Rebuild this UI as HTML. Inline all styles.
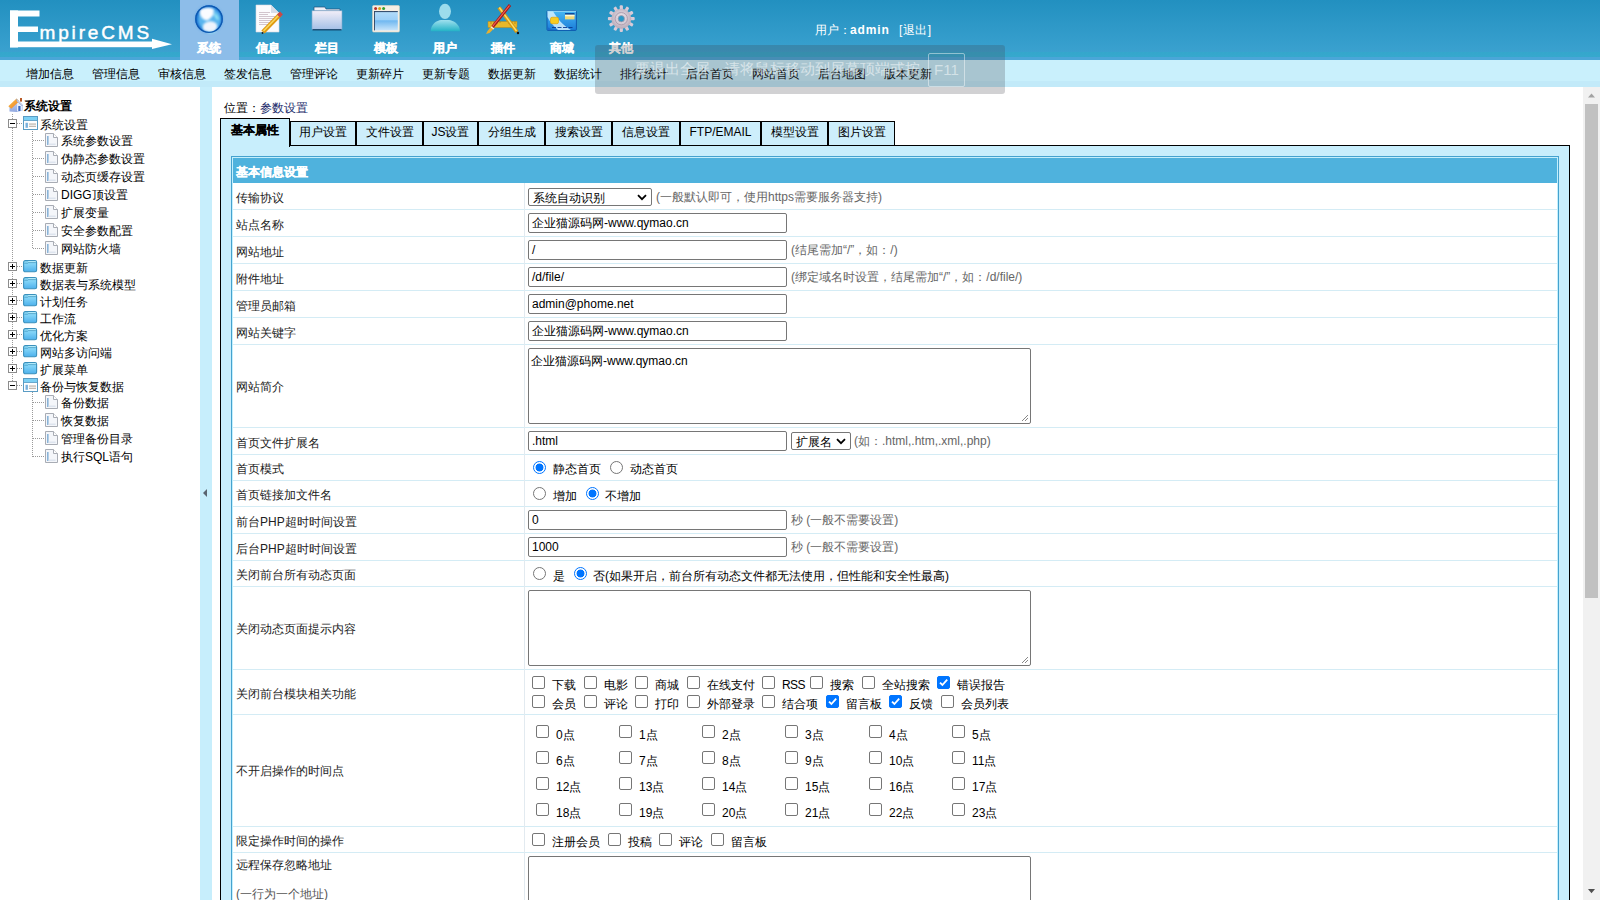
<!DOCTYPE html><html><head><meta charset="utf-8"><style>
*{margin:0;padding:0;box-sizing:border-box}
html,body{width:1600px;height:900px;overflow:hidden;background:#fff;font-family:"Liberation Sans", sans-serif;font-size:12px;color:#000}
.a{position:absolute;white-space:nowrap}
.t{position:absolute;white-space:nowrap;line-height:14px}
#hdr{position:absolute;left:0;top:0;width:1600px;height:60px;background:linear-gradient(#2290c0 0px,#3aa1cf 52px,#34a7cc 52px,#36a8cd 57px,#4aa6d8 57px,#4aa6d8 60px)}
#menu{position:absolute;left:0;top:60px;width:1600px;height:27px;background:linear-gradient(#c9f0fc 0,#c9f0fc 21px,#c2eaf9 21px,#c2eaf9 27px)}
.nav{position:absolute;top:0;width:59px;height:60px;color:#fff;font-weight:bold;text-align:center}
.nav .lb{position:absolute;left:-1px;top:41px;width:59px;line-height:14px;font-size:12px;-webkit-text-stroke:0.35px #fff}
.nav svg{position:absolute}
.mi{position:absolute;top:67px;line-height:14px;color:#000}
#left{position:absolute;left:0;top:87px;width:200px;height:813px;background:#fff}
#split{position:absolute;left:200px;top:87px;width:12px;height:813px;background:#c7eefc}
#content{position:absolute;left:212px;top:87px;width:1371px;height:813px;background:#fff;overflow:hidden}
#sb{position:absolute;left:1583px;top:87px;width:17px;height:813px;background:#f1f1f1}
</style></head><body>
<div id="hdr">
<svg class="a" style="left:0;top:0" width="180" height="60" viewBox="0 0 180 60">
<g fill="#fff">
<rect x="10" y="10.5" width="8" height="37"/>
<rect x="10" y="10.5" width="29.5" height="6"/>
<rect x="10" y="26.5" width="28" height="5.5"/>
<rect x="10" y="41.5" width="144" height="5.7"/>
<polygon points="152,38.8 172,44.3 152,49"/>
</g>
<text x="39.5" y="38.6" fill="#fff" stroke="#fff" stroke-width="0.45" font-family="Liberation Sans" font-size="19" letter-spacing="2.85">mpireCMS</text>
</svg>
<div class="a" style="left:180px;top:0;width:59px;height:60px;background:#8dbde9"></div>
<div class="nav" style="left:180px"><div class="lb">系统</div></div>
<div class="nav" style="left:239px"><div class="lb">信息</div></div>
<div class="nav" style="left:298px"><div class="lb">栏目</div></div>
<div class="nav" style="left:357px"><div class="lb">模板</div></div>
<div class="nav" style="left:416px"><div class="lb">用户</div></div>
<div class="nav" style="left:474px"><div class="lb">插件</div></div>
<div class="nav" style="left:533px"><div class="lb">商城</div></div>
<div class="nav" style="left:592px"><div class="lb">其他</div></div>

<svg class="a" style="left:0;top:0" width="660" height="40" viewBox="0 0 660 40">
<defs>
<radialGradient id="gb" cx="0.45" cy="0.4" r="0.6"><stop offset="0" stop-color="#7cc4f0"/><stop offset="0.7" stop-color="#2a86d6"/><stop offset="1" stop-color="#0b56a8"/></radialGradient>
<linearGradient id="fd" x1="0" y1="0" x2="0" y2="1"><stop offset="0" stop-color="#f2eef8"/><stop offset="1" stop-color="#a4c0e6"/></linearGradient>
<linearGradient id="wn" x1="0" y1="0" x2="0" y2="1"><stop offset="0" stop-color="#b4dcfa"/><stop offset="0.45" stop-color="#9cd0f8"/><stop offset="0.5" stop-color="#70b8f0"/><stop offset="1" stop-color="#c8e4fa"/></linearGradient>
<linearGradient id="us" x1="0" y1="0" x2="0" y2="1"><stop offset="0" stop-color="#a0e0ee"/><stop offset="1" stop-color="#22b2c6"/></linearGradient>
<linearGradient id="cd" x1="0" y1="0" x2="1" y2="1"><stop offset="0" stop-color="#bfe2fa"/><stop offset="0.45" stop-color="#5ab4ee"/><stop offset="1" stop-color="#0e6cc8"/></linearGradient>
<radialGradient id="gr" cx="0.5" cy="0.45" r="0.55"><stop offset="0" stop-color="#f4eef4"/><stop offset="1" stop-color="#b8aab8"/></radialGradient>
</defs>
<!-- globe -->
<filter id="bl" x="-20%" y="-20%" width="140%" height="140%"><feGaussianBlur stdDeviation="0.9"/></filter>
<filter id="bl2" x="-20%" y="-20%" width="140%" height="140%"><feGaussianBlur stdDeviation="0.5"/></filter>
<circle cx="209" cy="19.1" r="14.2" fill="#3a8ee0" opacity="0.35" filter="url(#bl)"/>
<circle cx="209" cy="19.1" r="13.8" fill="#1a72d0"/>
<circle cx="209.5" cy="19.5" r="11.5" fill="#58b4ee" filter="url(#bl)"/>
<g filter="url(#bl)">
<path d="M200,10 C204,7 211,7 214,9.5 C213,12.5 214.5,14.5 212,16.5 C209.5,19 208,21.5 205,20 C201.5,18.5 199,14.5 200,10Z" fill="#fafcff"/>
<path d="M203,25 C206,21 211,20.5 215,22.5 C218,24.5 218,28 215,30.5 C211,32.5 206,32 203,29.5Z" fill="#f0f4fc"/>
<path d="M214,13 C217,14 219,17 218.5,20.5 C216,19.5 214,16.5 214,13Z" fill="#90e4f4"/>
<path d="M208,32 C211,33 214,32.5 216,31" stroke="#a0ecf8" stroke-width="1.5" fill="none"/>
</g>
<circle cx="209" cy="19.1" r="13.2" fill="none" stroke="#0c58b0" stroke-width="1.3" filter="url(#bl2)"/>
<!-- document -->
<path d="M256,5 L271,5 L279,13 L279,32 L256,32Z" fill="#fbfbfd" stroke="#d8d8e0" stroke-width="0.6"/>
<path d="M271,5 L271,13 L279,13Z" fill="#d8dde8"/>
<g stroke="#c8b8c0" stroke-width="0.8"><line x1="259" y1="12.5" x2="270" y2="12.5"/><line x1="259" y1="14.5" x2="268" y2="14.5"/><line x1="259" y1="16.5" x2="275" y2="16.5"/><line x1="259" y1="18.5" x2="275" y2="18.5"/><line x1="259" y1="20.5" x2="274" y2="20.5"/><line x1="259" y1="22.5" x2="272" y2="22.5"/><line x1="259" y1="24.5" x2="268" y2="24.5"/></g>
<line x1="263" y1="32" x2="280" y2="14.5" stroke="#e09a10" stroke-width="4.6"/>
<line x1="263.5" y1="31" x2="279" y2="15" stroke="#f8d860" stroke-width="1.6"/>
<line x1="278.5" y1="16" x2="281.5" y2="13" stroke="#c84848" stroke-width="4"/>
<circle cx="262.5" cy="33" r="0.9" fill="#222"/>
<!-- folder -->
<path d="M314,7 L325,7 L326,9 L340,9 L340,11 L314,11Z" fill="#eef0f8" stroke="#1c4e78" stroke-width="0.7"/>
<rect x="312" y="10.8" width="30" height="18.8" fill="url(#fd)" stroke="#7ea8cc" stroke-width="0.6"/>
<line x1="312.5" y1="29.8" x2="341.5" y2="29.8" stroke="#0d3a60" stroke-width="1.2"/>
<!-- window -->
<rect x="372.6" y="5.6" width="26.8" height="26.4" rx="1" fill="#f6efe4" stroke="#e2d6c2" stroke-width="0.6"/>
<circle cx="375.6" cy="8.4" r="1.5" fill="#b8302a"/><circle cx="379.6" cy="8.4" r="1.5" fill="#d8a018"/><circle cx="383.6" cy="8.4" r="1.5" fill="#30a030"/>
<rect x="374.2" y="11.2" width="23.6" height="19.2" fill="url(#wn)"/>
<line x1="374.2" y1="11.6" x2="397.8" y2="11.6" stroke="#1a3050" stroke-width="0.9"/>
<line x1="374.5" y1="11.2" x2="374.5" y2="30.4" stroke="#1a3050" stroke-width="0.8"/>
<!-- user -->
<ellipse cx="445" cy="11.3" rx="6" ry="7.6" fill="#9cdcec"/>
<path d="M430.7,31.3 C430.7,24 437,20.5 441,20 L449,20 C453,20.5 460,24 460,31.3Z" fill="url(#us)"/>
<!-- plugin -->
<path d="M488,21.5 L517,21.5 L517,27.5 L488,27.5Z" fill="#e8b82a" stroke="#b88818" stroke-width="0.5"/>
<g stroke="#9a6a10" stroke-width="0.6"><line x1="491" y1="21.5" x2="491" y2="24"/><line x1="494" y1="21.5" x2="494" y2="23"/><line x1="497" y1="21.5" x2="497" y2="24"/><line x1="500" y1="21.5" x2="500" y2="23"/><line x1="509" y1="21.5" x2="509" y2="24"/><line x1="512" y1="21.5" x2="512" y2="23"/><line x1="515" y1="21.5" x2="515" y2="24"/></g>
<line x1="499" y1="7.5" x2="517" y2="32" stroke="#d89810" stroke-width="3.8"/>
<line x1="499.3" y1="7.5" x2="516.5" y2="31" stroke="#f8e070" stroke-width="1.4"/>
<circle cx="518" cy="33" r="1.2" fill="#111"/>
<line x1="510" y1="5" x2="492.5" y2="27" stroke="#a81818" stroke-width="3"/>
<line x1="509.5" y1="5.5" x2="492.5" y2="26.5" stroke="#f06a58" stroke-width="1.1"/>
<path d="M491.5,26 L487.5,31 L486,34 L489.5,33 L494,28.5Z" fill="#e8b030"/>
<path d="M491,27 L494,29" stroke="#f8f0e0" stroke-width="1.2"/>
<!-- card -->
<linearGradient id="cb" x1="0" y1="0" x2="0" y2="1"><stop offset="0" stop-color="#48b8f4"/><stop offset="1" stop-color="#1a7cd8"/></linearGradient>
<rect x="547" y="10.8" width="29.4" height="19.6" rx="1" fill="url(#cb)" stroke="#0b52a8" stroke-width="0.9"/>
<path d="M547.5,11.3 L553,11.3 C557,18 562,25 571,30 L558,30 C553,26 549.5,21 547.5,17Z" fill="#d4f0fe" opacity="0.85"/>
<path d="M547.5,11.3 L576,11.3" stroke="#a8e4fc" stroke-width="0.9"/>
<path d="M547.5,27 C550,29 553,30 556,30 L547.5,30Z" fill="#1a6ccc"/>
<rect x="550.5" y="17.3" width="8" height="6.4" rx="1.6" fill="#f8cc20" stroke="#e0a818" stroke-width="0.8"/>
<rect x="565" y="13" width="9.5" height="1.8" fill="#0a4aa0"/>
<rect x="565" y="14.8" width="9.5" height="4.6" fill="#f0d878"/>
<rect x="565" y="14.8" width="9.5" height="1.5" fill="#fff8d8"/>
<line x1="552" y1="27.5" x2="573" y2="27.5" stroke="#0a3a90" stroke-width="0.9" stroke-dasharray="4 1.5"/>
<!-- gear -->
<g transform="translate(621.3,18.7)">
<g fill="#d8cbd8">
<rect x="-1.6" y="-13.4" width="3.2" height="5" rx="1"/>
<rect x="-1.6" y="-13.4" width="3.2" height="5" rx="1" transform="rotate(30)"/>
<rect x="-1.6" y="-13.4" width="3.2" height="5" rx="1" transform="rotate(60)"/>
<rect x="-1.6" y="-13.4" width="3.2" height="5" rx="1" transform="rotate(90)"/>
<rect x="-1.6" y="-13.4" width="3.2" height="5" rx="1" transform="rotate(120)"/>
<rect x="-1.6" y="-13.4" width="3.2" height="5" rx="1" transform="rotate(150)"/>
<rect x="-1.6" y="-13.4" width="3.2" height="5" rx="1" transform="rotate(180)"/>
<rect x="-1.6" y="-13.4" width="3.2" height="5" rx="1" transform="rotate(210)"/>
<rect x="-1.6" y="-13.4" width="3.2" height="5" rx="1" transform="rotate(240)"/>
<rect x="-1.6" y="-13.4" width="3.2" height="5" rx="1" transform="rotate(270)"/>
<rect x="-1.6" y="-13.4" width="3.2" height="5" rx="1" transform="rotate(300)"/>
<rect x="-1.6" y="-13.4" width="3.2" height="5" rx="1" transform="rotate(330)"/>
</g>
<circle r="10" fill="url(#gr)"/>
<circle r="6.2" fill="none" stroke="#b0a0b0" stroke-width="1"/>
<circle r="3.2" fill="#2a9ac8"/>
<circle r="3.2" fill="none" stroke="#a898a8" stroke-width="0.8"/>
</g>
</svg>

</div>
<div class="t" style="left:815px;top:23px;color:#fff">用户：</div>
<div class="t" style="left:850px;top:23px;color:#fff;font-weight:bold;letter-spacing:0.9px">admin</div>
<div class="t" style="left:899px;top:23px;color:#fff;letter-spacing:0.5px">[退出]</div>
<div id="menu"></div>
<div class="mi" style="left:26px">增加信息</div>
<div class="mi" style="left:92px">管理信息</div>
<div class="mi" style="left:158px">审核信息</div>
<div class="mi" style="left:224px">签发信息</div>
<div class="mi" style="left:290px">管理评论</div>
<div class="mi" style="left:356px">更新碎片</div>
<div class="mi" style="left:422px">更新专题</div>
<div class="mi" style="left:488px">数据更新</div>
<div class="mi" style="left:554px">数据统计</div>
<div class="mi" style="left:620px">排行统计</div>
<div class="mi" style="left:686px">后台首页</div>
<div class="mi" style="left:752px">网站首页</div>
<div class="mi" style="left:818px">后台地图</div>
<div class="mi" style="left:884px">版本更新</div>
<div id="left"></div>
<svg class="a" style="left:8px;top:97px" width="16" height="16" viewBox="0 0 16 16"><defs><linearGradient id="rf" x1="0" y1="0" x2="1" y2="1"><stop offset="0" stop-color="#f8c850"/><stop offset="1" stop-color="#f07a20"/></linearGradient><linearGradient id="wl" x1="0" y1="0" x2="0" y2="1"><stop offset="0" stop-color="#c8d4f4"/><stop offset="1" stop-color="#90a8e0"/></linearGradient></defs><path d="M1.5,9 L1.5,14.5 L9,15 L14.5,13.5 L14.5,8.5 L9,3 Z" fill="url(#wl)"/><path d="M9,4 L14,8.8 L14,13.4 L9,14.6Z" fill="#e4ecfc"/><rect x="10.3" y="9" width="2.2" height="5" fill="#3a68c0"/><path d="M0.3,9.2 L8.5,1.5 L11.2,4.2 L3.3,11.8Z" fill="url(#rf)"/><path d="M8.5,2 L14.8,8.2 L14.2,9 L9,4.2Z" fill="#d8e0f0" stroke="#8898c8" stroke-width="0.5"/><rect x="12" y="1" width="2" height="3.6" fill="#b85a28"/></svg>
<div class="t" style="left:24px;top:99px;font-weight:bold">系统设置</div>
<div class="a" style="left:12px;top:114px;width:1px;height:271px;background:repeating-linear-gradient(to bottom,#9a9a9a 0,#9a9a9a 1px,transparent 1px,transparent 2px)"></div>
<div class="a" style="left:8px;top:119px;width:9px;height:9px;border:1px solid #8c8c8c;background:#fff"></div><div class="a" style="left:10px;top:123px;width:5px;height:1px;background:#000"></div>
<div class="a" style="left:17px;top:123px;width:6px;height:1px;background:repeating-linear-gradient(to right,#9a9a9a 0,#9a9a9a 1px,transparent 1px,transparent 2px)"></div>
<svg class="a" style="left:23px;top:116px" width="15" height="14" viewBox="0 0 15 14"><rect x="0.5" y="0.5" width="14" height="13" fill="#fdfeff" stroke="#5a9cc4" stroke-width="1"/><rect x="1" y="1" width="13" height="3.2" fill="#7cd0f4"/><line x1="1" y1="4.5" x2="14" y2="4.5" stroke="#4a94c0" stroke-width="0.8"/><rect x="2.5" y="6.8" width="2.4" height="5" fill="#78b0dc"/><rect x="6" y="7.6" width="7" height="0.9" fill="#a89c90"/><rect x="6" y="9.8" width="7" height="0.9" fill="#a89c90"/></svg>
<div class="t" style="left:40px;top:118px">系统设置</div>
<div class="a" style="left:32px;top:131px;width:1px;height:117px;background:repeating-linear-gradient(to bottom,#9a9a9a 0,#9a9a9a 1px,transparent 1px,transparent 2px)"></div>
<div class="a" style="left:33px;top:140px;width:12px;height:1px;background:repeating-linear-gradient(to right,#9a9a9a 0,#9a9a9a 1px,transparent 1px,transparent 2px)"></div>
<svg class="a" style="left:45px;top:133px" width="13" height="14" viewBox="0 0 13 14"><path d="M0.5,0.5 L8.5,0.5 L12.5,4.5 L12.5,13.5 L0.5,13.5Z" fill="#f4f6fa" stroke="#a8acb4" stroke-width="1"/><path d="M8.5,0.5 L8.5,4.5 L12.5,4.5" fill="#fff" stroke="#a8acb4" stroke-width="1"/><rect x="2" y="3" width="1.6" height="9" fill="#8ab4d8"/><rect x="3.6" y="10.5" width="7" height="1.5" fill="#dde4ee"/></svg>
<div class="t" style="left:61px;top:134px">系统参数设置</div>
<div class="a" style="left:33px;top:158px;width:12px;height:1px;background:repeating-linear-gradient(to right,#9a9a9a 0,#9a9a9a 1px,transparent 1px,transparent 2px)"></div>
<svg class="a" style="left:45px;top:151px" width="13" height="14" viewBox="0 0 13 14"><path d="M0.5,0.5 L8.5,0.5 L12.5,4.5 L12.5,13.5 L0.5,13.5Z" fill="#f4f6fa" stroke="#a8acb4" stroke-width="1"/><path d="M8.5,0.5 L8.5,4.5 L12.5,4.5" fill="#fff" stroke="#a8acb4" stroke-width="1"/><rect x="2" y="3" width="1.6" height="9" fill="#8ab4d8"/><rect x="3.6" y="10.5" width="7" height="1.5" fill="#dde4ee"/></svg>
<div class="t" style="left:61px;top:152px">伪静态参数设置</div>
<div class="a" style="left:33px;top:176px;width:12px;height:1px;background:repeating-linear-gradient(to right,#9a9a9a 0,#9a9a9a 1px,transparent 1px,transparent 2px)"></div>
<svg class="a" style="left:45px;top:169px" width="13" height="14" viewBox="0 0 13 14"><path d="M0.5,0.5 L8.5,0.5 L12.5,4.5 L12.5,13.5 L0.5,13.5Z" fill="#f4f6fa" stroke="#a8acb4" stroke-width="1"/><path d="M8.5,0.5 L8.5,4.5 L12.5,4.5" fill="#fff" stroke="#a8acb4" stroke-width="1"/><rect x="2" y="3" width="1.6" height="9" fill="#8ab4d8"/><rect x="3.6" y="10.5" width="7" height="1.5" fill="#dde4ee"/></svg>
<div class="t" style="left:61px;top:170px">动态页缓存设置</div>
<div class="a" style="left:33px;top:194px;width:12px;height:1px;background:repeating-linear-gradient(to right,#9a9a9a 0,#9a9a9a 1px,transparent 1px,transparent 2px)"></div>
<svg class="a" style="left:45px;top:187px" width="13" height="14" viewBox="0 0 13 14"><path d="M0.5,0.5 L8.5,0.5 L12.5,4.5 L12.5,13.5 L0.5,13.5Z" fill="#f4f6fa" stroke="#a8acb4" stroke-width="1"/><path d="M8.5,0.5 L8.5,4.5 L12.5,4.5" fill="#fff" stroke="#a8acb4" stroke-width="1"/><rect x="2" y="3" width="1.6" height="9" fill="#8ab4d8"/><rect x="3.6" y="10.5" width="7" height="1.5" fill="#dde4ee"/></svg>
<div class="t" style="left:61px;top:188px">DIGG顶设置</div>
<div class="a" style="left:33px;top:212px;width:12px;height:1px;background:repeating-linear-gradient(to right,#9a9a9a 0,#9a9a9a 1px,transparent 1px,transparent 2px)"></div>
<svg class="a" style="left:45px;top:205px" width="13" height="14" viewBox="0 0 13 14"><path d="M0.5,0.5 L8.5,0.5 L12.5,4.5 L12.5,13.5 L0.5,13.5Z" fill="#f4f6fa" stroke="#a8acb4" stroke-width="1"/><path d="M8.5,0.5 L8.5,4.5 L12.5,4.5" fill="#fff" stroke="#a8acb4" stroke-width="1"/><rect x="2" y="3" width="1.6" height="9" fill="#8ab4d8"/><rect x="3.6" y="10.5" width="7" height="1.5" fill="#dde4ee"/></svg>
<div class="t" style="left:61px;top:206px">扩展变量</div>
<div class="a" style="left:33px;top:230px;width:12px;height:1px;background:repeating-linear-gradient(to right,#9a9a9a 0,#9a9a9a 1px,transparent 1px,transparent 2px)"></div>
<svg class="a" style="left:45px;top:223px" width="13" height="14" viewBox="0 0 13 14"><path d="M0.5,0.5 L8.5,0.5 L12.5,4.5 L12.5,13.5 L0.5,13.5Z" fill="#f4f6fa" stroke="#a8acb4" stroke-width="1"/><path d="M8.5,0.5 L8.5,4.5 L12.5,4.5" fill="#fff" stroke="#a8acb4" stroke-width="1"/><rect x="2" y="3" width="1.6" height="9" fill="#8ab4d8"/><rect x="3.6" y="10.5" width="7" height="1.5" fill="#dde4ee"/></svg>
<div class="t" style="left:61px;top:224px">安全参数配置</div>
<div class="a" style="left:33px;top:248px;width:12px;height:1px;background:repeating-linear-gradient(to right,#9a9a9a 0,#9a9a9a 1px,transparent 1px,transparent 2px)"></div>
<svg class="a" style="left:45px;top:241px" width="13" height="14" viewBox="0 0 13 14"><path d="M0.5,0.5 L8.5,0.5 L12.5,4.5 L12.5,13.5 L0.5,13.5Z" fill="#f4f6fa" stroke="#a8acb4" stroke-width="1"/><path d="M8.5,0.5 L8.5,4.5 L12.5,4.5" fill="#fff" stroke="#a8acb4" stroke-width="1"/><rect x="2" y="3" width="1.6" height="9" fill="#8ab4d8"/><rect x="3.6" y="10.5" width="7" height="1.5" fill="#dde4ee"/></svg>
<div class="t" style="left:61px;top:242px">网站防火墙</div>
<div class="a" style="left:8px;top:262px;width:9px;height:9px;border:1px solid #8c8c8c;background:#fff"></div><div class="a" style="left:10px;top:266px;width:5px;height:1px;background:#000"></div><div class="a" style="left:12px;top:264px;width:1px;height:5px;background:#000"></div>
<div class="a" style="left:17px;top:266px;width:6px;height:1px;background:repeating-linear-gradient(to right,#9a9a9a 0,#9a9a9a 1px,transparent 1px,transparent 2px)"></div>
<svg class="a" style="left:23px;top:260px" width="15" height="13" viewBox="0 0 15 13"><defs><linearGradient id="fb0" x1="0" y1="0" x2="0" y2="1"><stop offset="0" stop-color="#9ae4fc"/><stop offset="1" stop-color="#4cb0ec"/></linearGradient></defs><rect x="0.6" y="0.6" width="13" height="11.2" rx="1.6" fill="url(#fb0)" stroke="#3a90bc" stroke-width="1.1"/><path d="M5,1.3 L12.8,1.3 L12.8,2.6 L5.6,2.6Z" fill="#c4f4fe"/><path d="M1.3,3.2 L4.6,3.2 L5.4,2.6 L12.9,2.6" fill="none" stroke="#3a90bc" stroke-width="0.7"/></svg>
<div class="t" style="left:40px;top:261px">数据更新</div>
<div class="a" style="left:8px;top:279px;width:9px;height:9px;border:1px solid #8c8c8c;background:#fff"></div><div class="a" style="left:10px;top:283px;width:5px;height:1px;background:#000"></div><div class="a" style="left:12px;top:281px;width:1px;height:5px;background:#000"></div>
<div class="a" style="left:17px;top:283px;width:6px;height:1px;background:repeating-linear-gradient(to right,#9a9a9a 0,#9a9a9a 1px,transparent 1px,transparent 2px)"></div>
<svg class="a" style="left:23px;top:277px" width="15" height="13" viewBox="0 0 15 13"><defs><linearGradient id="fb1" x1="0" y1="0" x2="0" y2="1"><stop offset="0" stop-color="#9ae4fc"/><stop offset="1" stop-color="#4cb0ec"/></linearGradient></defs><rect x="0.6" y="0.6" width="13" height="11.2" rx="1.6" fill="url(#fb1)" stroke="#3a90bc" stroke-width="1.1"/><path d="M5,1.3 L12.8,1.3 L12.8,2.6 L5.6,2.6Z" fill="#c4f4fe"/><path d="M1.3,3.2 L4.6,3.2 L5.4,2.6 L12.9,2.6" fill="none" stroke="#3a90bc" stroke-width="0.7"/></svg>
<div class="t" style="left:40px;top:278px">数据表与系统模型</div>
<div class="a" style="left:8px;top:296px;width:9px;height:9px;border:1px solid #8c8c8c;background:#fff"></div><div class="a" style="left:10px;top:300px;width:5px;height:1px;background:#000"></div><div class="a" style="left:12px;top:298px;width:1px;height:5px;background:#000"></div>
<div class="a" style="left:17px;top:300px;width:6px;height:1px;background:repeating-linear-gradient(to right,#9a9a9a 0,#9a9a9a 1px,transparent 1px,transparent 2px)"></div>
<svg class="a" style="left:23px;top:294px" width="15" height="13" viewBox="0 0 15 13"><defs><linearGradient id="fb2" x1="0" y1="0" x2="0" y2="1"><stop offset="0" stop-color="#9ae4fc"/><stop offset="1" stop-color="#4cb0ec"/></linearGradient></defs><rect x="0.6" y="0.6" width="13" height="11.2" rx="1.6" fill="url(#fb2)" stroke="#3a90bc" stroke-width="1.1"/><path d="M5,1.3 L12.8,1.3 L12.8,2.6 L5.6,2.6Z" fill="#c4f4fe"/><path d="M1.3,3.2 L4.6,3.2 L5.4,2.6 L12.9,2.6" fill="none" stroke="#3a90bc" stroke-width="0.7"/></svg>
<div class="t" style="left:40px;top:295px">计划任务</div>
<div class="a" style="left:8px;top:313px;width:9px;height:9px;border:1px solid #8c8c8c;background:#fff"></div><div class="a" style="left:10px;top:317px;width:5px;height:1px;background:#000"></div><div class="a" style="left:12px;top:315px;width:1px;height:5px;background:#000"></div>
<div class="a" style="left:17px;top:317px;width:6px;height:1px;background:repeating-linear-gradient(to right,#9a9a9a 0,#9a9a9a 1px,transparent 1px,transparent 2px)"></div>
<svg class="a" style="left:23px;top:311px" width="15" height="13" viewBox="0 0 15 13"><defs><linearGradient id="fb3" x1="0" y1="0" x2="0" y2="1"><stop offset="0" stop-color="#9ae4fc"/><stop offset="1" stop-color="#4cb0ec"/></linearGradient></defs><rect x="0.6" y="0.6" width="13" height="11.2" rx="1.6" fill="url(#fb3)" stroke="#3a90bc" stroke-width="1.1"/><path d="M5,1.3 L12.8,1.3 L12.8,2.6 L5.6,2.6Z" fill="#c4f4fe"/><path d="M1.3,3.2 L4.6,3.2 L5.4,2.6 L12.9,2.6" fill="none" stroke="#3a90bc" stroke-width="0.7"/></svg>
<div class="t" style="left:40px;top:312px">工作流</div>
<div class="a" style="left:8px;top:330px;width:9px;height:9px;border:1px solid #8c8c8c;background:#fff"></div><div class="a" style="left:10px;top:334px;width:5px;height:1px;background:#000"></div><div class="a" style="left:12px;top:332px;width:1px;height:5px;background:#000"></div>
<div class="a" style="left:17px;top:334px;width:6px;height:1px;background:repeating-linear-gradient(to right,#9a9a9a 0,#9a9a9a 1px,transparent 1px,transparent 2px)"></div>
<svg class="a" style="left:23px;top:328px" width="15" height="13" viewBox="0 0 15 13"><defs><linearGradient id="fb4" x1="0" y1="0" x2="0" y2="1"><stop offset="0" stop-color="#9ae4fc"/><stop offset="1" stop-color="#4cb0ec"/></linearGradient></defs><rect x="0.6" y="0.6" width="13" height="11.2" rx="1.6" fill="url(#fb4)" stroke="#3a90bc" stroke-width="1.1"/><path d="M5,1.3 L12.8,1.3 L12.8,2.6 L5.6,2.6Z" fill="#c4f4fe"/><path d="M1.3,3.2 L4.6,3.2 L5.4,2.6 L12.9,2.6" fill="none" stroke="#3a90bc" stroke-width="0.7"/></svg>
<div class="t" style="left:40px;top:329px">优化方案</div>
<div class="a" style="left:8px;top:347px;width:9px;height:9px;border:1px solid #8c8c8c;background:#fff"></div><div class="a" style="left:10px;top:351px;width:5px;height:1px;background:#000"></div><div class="a" style="left:12px;top:349px;width:1px;height:5px;background:#000"></div>
<div class="a" style="left:17px;top:351px;width:6px;height:1px;background:repeating-linear-gradient(to right,#9a9a9a 0,#9a9a9a 1px,transparent 1px,transparent 2px)"></div>
<svg class="a" style="left:23px;top:345px" width="15" height="13" viewBox="0 0 15 13"><defs><linearGradient id="fb5" x1="0" y1="0" x2="0" y2="1"><stop offset="0" stop-color="#9ae4fc"/><stop offset="1" stop-color="#4cb0ec"/></linearGradient></defs><rect x="0.6" y="0.6" width="13" height="11.2" rx="1.6" fill="url(#fb5)" stroke="#3a90bc" stroke-width="1.1"/><path d="M5,1.3 L12.8,1.3 L12.8,2.6 L5.6,2.6Z" fill="#c4f4fe"/><path d="M1.3,3.2 L4.6,3.2 L5.4,2.6 L12.9,2.6" fill="none" stroke="#3a90bc" stroke-width="0.7"/></svg>
<div class="t" style="left:40px;top:346px">网站多访问端</div>
<div class="a" style="left:8px;top:364px;width:9px;height:9px;border:1px solid #8c8c8c;background:#fff"></div><div class="a" style="left:10px;top:368px;width:5px;height:1px;background:#000"></div><div class="a" style="left:12px;top:366px;width:1px;height:5px;background:#000"></div>
<div class="a" style="left:17px;top:368px;width:6px;height:1px;background:repeating-linear-gradient(to right,#9a9a9a 0,#9a9a9a 1px,transparent 1px,transparent 2px)"></div>
<svg class="a" style="left:23px;top:362px" width="15" height="13" viewBox="0 0 15 13"><defs><linearGradient id="fb6" x1="0" y1="0" x2="0" y2="1"><stop offset="0" stop-color="#9ae4fc"/><stop offset="1" stop-color="#4cb0ec"/></linearGradient></defs><rect x="0.6" y="0.6" width="13" height="11.2" rx="1.6" fill="url(#fb6)" stroke="#3a90bc" stroke-width="1.1"/><path d="M5,1.3 L12.8,1.3 L12.8,2.6 L5.6,2.6Z" fill="#c4f4fe"/><path d="M1.3,3.2 L4.6,3.2 L5.4,2.6 L12.9,2.6" fill="none" stroke="#3a90bc" stroke-width="0.7"/></svg>
<div class="t" style="left:40px;top:363px">扩展菜单</div>
<div class="a" style="left:8px;top:381px;width:9px;height:9px;border:1px solid #8c8c8c;background:#fff"></div><div class="a" style="left:10px;top:385px;width:5px;height:1px;background:#000"></div>
<div class="a" style="left:17px;top:385px;width:6px;height:1px;background:repeating-linear-gradient(to right,#9a9a9a 0,#9a9a9a 1px,transparent 1px,transparent 2px)"></div>
<svg class="a" style="left:23px;top:378px" width="15" height="14" viewBox="0 0 15 14"><rect x="0.5" y="0.5" width="14" height="13" fill="#fdfeff" stroke="#5a9cc4" stroke-width="1"/><rect x="1" y="1" width="13" height="3.2" fill="#7cd0f4"/><line x1="1" y1="4.5" x2="14" y2="4.5" stroke="#4a94c0" stroke-width="0.8"/><rect x="2.5" y="6.8" width="2.4" height="5" fill="#78b0dc"/><rect x="6" y="7.6" width="7" height="0.9" fill="#a89c90"/><rect x="6" y="9.8" width="7" height="0.9" fill="#a89c90"/></svg>
<div class="t" style="left:40px;top:380px">备份与恢复数据</div>
<div class="a" style="left:32px;top:392px;width:1px;height:65px;background:repeating-linear-gradient(to bottom,#9a9a9a 0,#9a9a9a 1px,transparent 1px,transparent 2px)"></div>
<div class="a" style="left:33px;top:402px;width:12px;height:1px;background:repeating-linear-gradient(to right,#9a9a9a 0,#9a9a9a 1px,transparent 1px,transparent 2px)"></div>
<svg class="a" style="left:45px;top:395px" width="13" height="14" viewBox="0 0 13 14"><path d="M0.5,0.5 L8.5,0.5 L12.5,4.5 L12.5,13.5 L0.5,13.5Z" fill="#f4f6fa" stroke="#a8acb4" stroke-width="1"/><path d="M8.5,0.5 L8.5,4.5 L12.5,4.5" fill="#fff" stroke="#a8acb4" stroke-width="1"/><rect x="2" y="3" width="1.6" height="9" fill="#8ab4d8"/><rect x="3.6" y="10.5" width="7" height="1.5" fill="#dde4ee"/></svg>
<div class="t" style="left:61px;top:396px">备份数据</div>
<div class="a" style="left:33px;top:420px;width:12px;height:1px;background:repeating-linear-gradient(to right,#9a9a9a 0,#9a9a9a 1px,transparent 1px,transparent 2px)"></div>
<svg class="a" style="left:45px;top:413px" width="13" height="14" viewBox="0 0 13 14"><path d="M0.5,0.5 L8.5,0.5 L12.5,4.5 L12.5,13.5 L0.5,13.5Z" fill="#f4f6fa" stroke="#a8acb4" stroke-width="1"/><path d="M8.5,0.5 L8.5,4.5 L12.5,4.5" fill="#fff" stroke="#a8acb4" stroke-width="1"/><rect x="2" y="3" width="1.6" height="9" fill="#8ab4d8"/><rect x="3.6" y="10.5" width="7" height="1.5" fill="#dde4ee"/></svg>
<div class="t" style="left:61px;top:414px">恢复数据</div>
<div class="a" style="left:33px;top:438px;width:12px;height:1px;background:repeating-linear-gradient(to right,#9a9a9a 0,#9a9a9a 1px,transparent 1px,transparent 2px)"></div>
<svg class="a" style="left:45px;top:431px" width="13" height="14" viewBox="0 0 13 14"><path d="M0.5,0.5 L8.5,0.5 L12.5,4.5 L12.5,13.5 L0.5,13.5Z" fill="#f4f6fa" stroke="#a8acb4" stroke-width="1"/><path d="M8.5,0.5 L8.5,4.5 L12.5,4.5" fill="#fff" stroke="#a8acb4" stroke-width="1"/><rect x="2" y="3" width="1.6" height="9" fill="#8ab4d8"/><rect x="3.6" y="10.5" width="7" height="1.5" fill="#dde4ee"/></svg>
<div class="t" style="left:61px;top:432px">管理备份目录</div>
<div class="a" style="left:33px;top:456px;width:12px;height:1px;background:repeating-linear-gradient(to right,#9a9a9a 0,#9a9a9a 1px,transparent 1px,transparent 2px)"></div>
<svg class="a" style="left:45px;top:449px" width="13" height="14" viewBox="0 0 13 14"><path d="M0.5,0.5 L8.5,0.5 L12.5,4.5 L12.5,13.5 L0.5,13.5Z" fill="#f4f6fa" stroke="#a8acb4" stroke-width="1"/><path d="M8.5,0.5 L8.5,4.5 L12.5,4.5" fill="#fff" stroke="#a8acb4" stroke-width="1"/><rect x="2" y="3" width="1.6" height="9" fill="#8ab4d8"/><rect x="3.6" y="10.5" width="7" height="1.5" fill="#dde4ee"/></svg>
<div class="t" style="left:61px;top:450px">执行SQL语句</div>
<div id="split"></div>
<svg class="a" style="left:200px;top:486px" width="12" height="14"><polygon points="3,7 7,3 7,11" fill="#5a6470"/></svg>
<style>
.inp{position:absolute;height:20px;border:1px solid #767676;border-radius:2px;background:#fff;padding-left:3px;line-height:19px;color:#000;white-space:nowrap;overflow:hidden}
.sel{position:absolute;height:18px;border:1px solid #767676;border-radius:2px;background:#fff;padding-left:4px;line-height:19px;white-space:nowrap;overflow:hidden}
.ta{position:absolute;border:1px solid #767676;border-radius:2px;background:#fff;padding:5px 0 0 2px;line-height:14px;white-space:nowrap;overflow:hidden}
.hint{position:absolute;line-height:14px;color:#666;white-space:nowrap}
.lbl{position:absolute;left:236px;line-height:14px;color:#222;white-space:nowrap}
.rd{position:absolute;width:13px;height:13px;border:1px solid #767676;border-radius:50%;background:#fff}
.rd.on{border:1px solid #0075ff;background:radial-gradient(circle,#0075ff 0,#0075ff 3.6px,#fff 4.3px)}
.cb{position:absolute;width:13px;height:13px;border:1px solid #767676;border-radius:2px;background:#fff}
.cb.on{border:1px solid #0075ff;background:#0075ff}
.tab{position:absolute;top:121px;height:24px;border:1px solid #000;border-bottom:none;background:#cdeefb;text-align:center;line-height:14px;padding-top:3px;white-space:nowrap}
</style>
<div class="t" style="left:224px;top:101px">位置：<span style="color:#1a2a6a">参数设置</span></div>
<div class="a" style="left:220px;top:145px;width:1350px;height:760px;border:1px solid #000;background:#c8eefc"></div>
<div class="tab" style="left:290px;width:66px">用户设置</div>
<div class="tab" style="left:356px;width:67px">文件设置</div>
<div class="tab" style="left:423px;width:55px">JS设置</div>
<div class="tab" style="left:478px;width:67px">分组生成</div>
<div class="tab" style="left:545px;width:67px">搜索设置</div>
<div class="tab" style="left:612px;width:68px">信息设置</div>
<div class="tab" style="left:680px;width:81px">FTP/EMAIL</div>
<div class="tab" style="left:761px;width:67px">模型设置</div>
<div class="tab" style="left:828px;width:67px">图片设置</div>
<div class="tab" style="left:220px;top:118px;width:70px;height:29px;background:#c8eefc;font-weight:bold;padding-top:4px;border-bottom:none;-webkit-text-stroke:0.2px #000">基本属性</div>
<div class="a" style="left:231px;top:156px;width:1328px;height:760px;border:1px solid #45a2cf;background:#c4effc"></div>
<div class="a" style="left:233px;top:158px;width:1324px;height:25px;background:#4fb2dd"></div>
<div class="t" style="left:236px;top:165px;color:#fff;font-weight:bold;-webkit-text-stroke:0.3px #fff">基本信息设置</div>
<div class="a" style="left:233px;top:183px;width:1324px;height:720px;background:#fff"></div>
<div class="a" style="left:233px;top:209px;width:1324px;height:1px;background:#d4ecf5"></div>
<div class="a" style="left:233px;top:236px;width:1324px;height:1px;background:#d4ecf5"></div>
<div class="a" style="left:233px;top:263px;width:1324px;height:1px;background:#d4ecf5"></div>
<div class="a" style="left:233px;top:290px;width:1324px;height:1px;background:#d4ecf5"></div>
<div class="a" style="left:233px;top:317px;width:1324px;height:1px;background:#d4ecf5"></div>
<div class="a" style="left:233px;top:344px;width:1324px;height:1px;background:#d4ecf5"></div>
<div class="a" style="left:233px;top:427px;width:1324px;height:1px;background:#d4ecf5"></div>
<div class="a" style="left:233px;top:454px;width:1324px;height:1px;background:#d4ecf5"></div>
<div class="a" style="left:233px;top:480px;width:1324px;height:1px;background:#d4ecf5"></div>
<div class="a" style="left:233px;top:506px;width:1324px;height:1px;background:#d4ecf5"></div>
<div class="a" style="left:233px;top:533px;width:1324px;height:1px;background:#d4ecf5"></div>
<div class="a" style="left:233px;top:560px;width:1324px;height:1px;background:#d4ecf5"></div>
<div class="a" style="left:233px;top:586px;width:1324px;height:1px;background:#d4ecf5"></div>
<div class="a" style="left:233px;top:669px;width:1324px;height:1px;background:#d4ecf5"></div>
<div class="a" style="left:233px;top:714px;width:1324px;height:1px;background:#d4ecf5"></div>
<div class="a" style="left:233px;top:826px;width:1324px;height:1px;background:#d4ecf5"></div>
<div class="a" style="left:233px;top:852px;width:1324px;height:1px;background:#d4ecf5"></div>
<div class="a" style="left:524px;top:183px;width:1px;height:720px;background:#e2eaf0"></div>
<div class="lbl" style="top:191px">传输协议</div>
<div class="lbl" style="top:218px">站点名称</div>
<div class="lbl" style="top:245px">网站地址</div>
<div class="lbl" style="top:272px">附件地址</div>
<div class="lbl" style="top:299px">管理员邮箱</div>
<div class="lbl" style="top:326px">网站关键字</div>
<div class="lbl" style="top:380px">网站简介</div>
<div class="lbl" style="top:436px">首页文件扩展名</div>
<div class="lbl" style="top:462px">首页模式</div>
<div class="lbl" style="top:488px">首页链接加文件名</div>
<div class="lbl" style="top:515px">前台PHP超时时间设置</div>
<div class="lbl" style="top:542px">后台PHP超时时间设置</div>
<div class="lbl" style="top:568px">关闭前台所有动态页面</div>
<div class="lbl" style="top:622px">关闭动态页面提示内容</div>
<div class="lbl" style="top:687px">关闭前台模块相关功能</div>
<div class="lbl" style="top:764px">不开启操作的时间点</div>
<div class="lbl" style="top:834px">限定操作时间的操作</div>
<div class="lbl" style="top:858px">远程保存忽略地址</div>
<div class="lbl" style="top:887px;color:#555">(一行为一个地址)</div>
<div class="sel" style="left:528px;top:188px;width:124px">系统自动识别</div>
<svg class="a" style="left:637px;top:194px" width="10" height="7" viewBox="0 0 10 7"><path d="M1,1.2 L5,5.2 L9,1.2" fill="none" stroke="#000" stroke-width="1.8"/></svg>
<div class="hint" style="left:656px;top:190px;">(一般默认即可，使用htt<span>p</span>s需要服务器支持)</div>
<div class="inp" style="left:528px;top:213px;width:259px;height:20px">企业猫源码网-www.qymao.cn</div>
<div class="inp" style="left:528px;top:240px;width:259px;height:20px">/</div>
<div class="hint" style="left:791px;top:243px;">(结尾需加“/”，如：/)</div>
<div class="inp" style="left:528px;top:267px;width:259px;height:20px">/d/file/</div>
<div class="hint" style="left:791px;top:270px;">(绑定域名时设置，结尾需加“/”，如：/d/file/)</div>
<div class="inp" style="left:528px;top:294px;width:259px;height:20px">admin@phome.net</div>
<div class="inp" style="left:528px;top:321px;width:259px;height:20px">企业猫源码网-www.qymao.cn</div>
<div class="ta" style="left:528px;top:348px;width:503px;height:76px">企业猫源码网-www.qymao.cn</div>
<svg class="a" style="left:1021px;top:414px" width="8" height="8" viewBox="0 0 8 8"><path d="M7,1 L1,7 M7,4 L4,7" stroke="#888" stroke-width="1"/></svg>
<div class="inp" style="left:528px;top:431px;width:259px;height:20px">.html</div>
<div class="sel" style="left:791px;top:432px;width:60px">扩展名</div>
<svg class="a" style="left:836px;top:438px" width="10" height="7" viewBox="0 0 10 7"><path d="M1,1.2 L5,5.2 L9,1.2" fill="none" stroke="#000" stroke-width="1.8"/></svg>
<div class="hint" style="left:854px;top:434px;">(如：.html,.htm,.xml,.php)</div>
<div class="rd on" style="left:533px;top:461px"></div>
<div class="t" style="left:553px;top:462px;">静态首页</div>
<div class="rd" style="left:610px;top:461px"></div>
<div class="t" style="left:630px;top:462px;">动态首页</div>
<div class="rd" style="left:533px;top:487px"></div>
<div class="t" style="left:553px;top:489px;">增加</div>
<div class="rd on" style="left:586px;top:487px"></div>
<div class="t" style="left:605px;top:489px;">不增加</div>
<div class="inp" style="left:528px;top:510px;width:259px;height:20px">0</div>
<div class="hint" style="left:791px;top:513px;">秒 (一般不需要设置)</div>
<div class="inp" style="left:528px;top:537px;width:259px;height:20px">1000</div>
<div class="hint" style="left:791px;top:540px;">秒 (一般不需要设置)</div>
<div class="rd" style="left:533px;top:567px"></div>
<div class="t" style="left:553px;top:569px;">是</div>
<div class="rd on" style="left:574px;top:567px"></div>
<div class="t" style="left:593px;top:569px;">否(如果开启，前台所有动态文件都无法使用，但性能和安全性最高)</div>
<div class="ta" style="left:528px;top:590px;width:503px;height:76px"></div>
<svg class="a" style="left:1021px;top:656px" width="8" height="8" viewBox="0 0 8 8"><path d="M7,1 L1,7 M7,4 L4,7" stroke="#888" stroke-width="1"/></svg>
<div class="cb" style="left:532px;top:676px"></div>
<div class="t" style="left:552px;top:678px;">下载</div>
<div class="cb" style="left:584px;top:676px"></div>
<div class="t" style="left:604px;top:678px;">电影</div>
<div class="cb" style="left:635px;top:676px"></div>
<div class="t" style="left:655px;top:678px;">商城</div>
<div class="cb" style="left:687px;top:676px"></div>
<div class="t" style="left:707px;top:678px;">在线支付</div>
<div class="cb" style="left:762px;top:676px"></div>
<div class="t" style="left:782px;top:678px;letter-spacing:-0.6px">RSS</div>
<div class="cb" style="left:810px;top:676px"></div>
<div class="t" style="left:830px;top:678px;">搜索</div>
<div class="cb" style="left:862px;top:676px"></div>
<div class="t" style="left:882px;top:678px;">全站搜索</div>
<div class="cb on" style="left:937px;top:676px"><svg width="11" height="11" style="position:absolute;left:0;top:0" viewBox="0 0 11 11"><path d="M2,5.6 L4.4,8 L9.2,2.6" fill="none" stroke="#fff" stroke-width="1.8"/></svg></div>
<div class="t" style="left:957px;top:678px;">错误报告</div>
<div class="cb" style="left:532px;top:695px"></div>
<div class="t" style="left:552px;top:697px;">会员</div>
<div class="cb" style="left:584px;top:695px"></div>
<div class="t" style="left:604px;top:697px;">评论</div>
<div class="cb" style="left:635px;top:695px"></div>
<div class="t" style="left:655px;top:697px;">打印</div>
<div class="cb" style="left:687px;top:695px"></div>
<div class="t" style="left:707px;top:697px;">外部登录</div>
<div class="cb" style="left:762px;top:695px"></div>
<div class="t" style="left:782px;top:697px;">结合项</div>
<div class="cb on" style="left:826px;top:695px"><svg width="11" height="11" style="position:absolute;left:0;top:0" viewBox="0 0 11 11"><path d="M2,5.6 L4.4,8 L9.2,2.6" fill="none" stroke="#fff" stroke-width="1.8"/></svg></div>
<div class="t" style="left:846px;top:697px;">留言板</div>
<div class="cb on" style="left:889px;top:695px"><svg width="11" height="11" style="position:absolute;left:0;top:0" viewBox="0 0 11 11"><path d="M2,5.6 L4.4,8 L9.2,2.6" fill="none" stroke="#fff" stroke-width="1.8"/></svg></div>
<div class="t" style="left:909px;top:697px;">反馈</div>
<div class="cb" style="left:941px;top:695px"></div>
<div class="t" style="left:961px;top:697px;">会员列表</div>
<div class="cb" style="left:536px;top:725px"></div>
<div class="t" style="left:556px;top:728px;">0点</div>
<div class="cb" style="left:619px;top:725px"></div>
<div class="t" style="left:639px;top:728px;">1点</div>
<div class="cb" style="left:702px;top:725px"></div>
<div class="t" style="left:722px;top:728px;">2点</div>
<div class="cb" style="left:785px;top:725px"></div>
<div class="t" style="left:805px;top:728px;">3点</div>
<div class="cb" style="left:869px;top:725px"></div>
<div class="t" style="left:889px;top:728px;">4点</div>
<div class="cb" style="left:952px;top:725px"></div>
<div class="t" style="left:972px;top:728px;">5点</div>
<div class="cb" style="left:536px;top:751px"></div>
<div class="t" style="left:556px;top:754px;">6点</div>
<div class="cb" style="left:619px;top:751px"></div>
<div class="t" style="left:639px;top:754px;">7点</div>
<div class="cb" style="left:702px;top:751px"></div>
<div class="t" style="left:722px;top:754px;">8点</div>
<div class="cb" style="left:785px;top:751px"></div>
<div class="t" style="left:805px;top:754px;">9点</div>
<div class="cb" style="left:869px;top:751px"></div>
<div class="t" style="left:889px;top:754px;">10点</div>
<div class="cb" style="left:952px;top:751px"></div>
<div class="t" style="left:972px;top:754px;">11点</div>
<div class="cb" style="left:536px;top:777px"></div>
<div class="t" style="left:556px;top:780px;">12点</div>
<div class="cb" style="left:619px;top:777px"></div>
<div class="t" style="left:639px;top:780px;">13点</div>
<div class="cb" style="left:702px;top:777px"></div>
<div class="t" style="left:722px;top:780px;">14点</div>
<div class="cb" style="left:785px;top:777px"></div>
<div class="t" style="left:805px;top:780px;">15点</div>
<div class="cb" style="left:869px;top:777px"></div>
<div class="t" style="left:889px;top:780px;">16点</div>
<div class="cb" style="left:952px;top:777px"></div>
<div class="t" style="left:972px;top:780px;">17点</div>
<div class="cb" style="left:536px;top:803px"></div>
<div class="t" style="left:556px;top:806px;">18点</div>
<div class="cb" style="left:619px;top:803px"></div>
<div class="t" style="left:639px;top:806px;">19点</div>
<div class="cb" style="left:702px;top:803px"></div>
<div class="t" style="left:722px;top:806px;">20点</div>
<div class="cb" style="left:785px;top:803px"></div>
<div class="t" style="left:805px;top:806px;">21点</div>
<div class="cb" style="left:869px;top:803px"></div>
<div class="t" style="left:889px;top:806px;">22点</div>
<div class="cb" style="left:952px;top:803px"></div>
<div class="t" style="left:972px;top:806px;">23点</div>
<div class="cb" style="left:532px;top:833px"></div>
<div class="t" style="left:552px;top:835px;">注册会员</div>
<div class="cb" style="left:608px;top:833px"></div>
<div class="t" style="left:628px;top:835px;">投稿</div>
<div class="cb" style="left:659px;top:833px"></div>
<div class="t" style="left:679px;top:835px;">评论</div>
<div class="cb" style="left:711px;top:833px"></div>
<div class="t" style="left:731px;top:835px;">留言板</div>
<div class="ta" style="left:528px;top:856px;width:503px;height:80px"></div>
<svg class="a" style="left:1021px;top:926px" width="8" height="8" viewBox="0 0 8 8"><path d="M7,1 L1,7 M7,4 L4,7" stroke="#888" stroke-width="1"/></svg>
<div id="sb"></div>
<svg class="a" style="left:1583px;top:87px" width="17" height="813" viewBox="0 0 17 813"><polygon points="5,10.6 8.5,6.5 12,10.6" fill="#a3a3a3"/><rect x="2" y="17" width="13" height="494" fill="#c1c1c1"/><polygon points="5,802 12,802 8.5,806.2" fill="#505050"/></svg>
<div class="a" style="left:595px;top:45px;width:410px;height:49px;border-radius:3px;background:rgba(64,62,72,0.24)"></div>
<div class="a" style="left:635px;top:60px;line-height:17px;font-size:15px;color:rgba(255,255,255,0.55)">要退出全屏，请将鼠标移动到屏幕顶端或按</div>
<div class="a" style="left:928px;top:53px;width:37px;height:34px;border:1px solid rgba(255,255,255,0.45);border-radius:2px"></div>
<div class="a" style="left:934px;top:61px;line-height:17px;font-size:15px;color:rgba(255,255,255,0.5)">F11</div>
</body></html>
